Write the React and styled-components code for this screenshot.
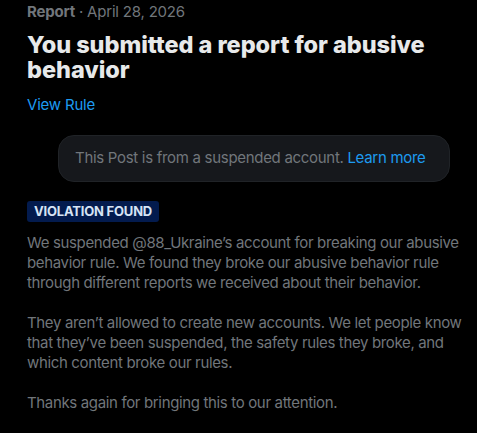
import React from "react";
import styled, { createGlobalStyle } from "styled-components";

const GlobalStyle = createGlobalStyle`
  html, body {
    margin: 0;
    padding: 0;
    background: #000;
  }
  body {
    font-family: Inter, "Liberation Sans", sans-serif;
  }
`;

const Page = styled.div`
  width: 477px;
  height: 433px;
  overflow: hidden;
  background: #000;
  padding: 2px 12px 0 27px;
  box-sizing: border-box;
  display: flex;
  flex-direction: column;
`;

const Meta = styled.div`
  font-size: 15px;
  line-height: 20px;
  color: #71767b;
  letter-spacing: -0.2px;
`;

const MetaStrong = styled.span`
  font-weight: 700;
`;

const Title = styled.h1`
  margin: 10px 0 0;
  font-size: 23.5px;
  line-height: 25px;
  font-weight: 800;
  color: #e7e9ea;
  letter-spacing: -0.05px;
`;

const Link = styled.a`
  color: #1d9bf0;
  text-decoration: none;
  cursor: pointer;
`;

const RuleLink = styled(Link)`
  margin-top: 13px;
  font-size: 15px;
  line-height: 20px;
  letter-spacing: -0.2px;
`;

const Notice = styled.div`
  margin: 20px 0 0 31px;
  width: 392px;
  box-sizing: border-box;
  padding: 12px 16px 13px;
  background: #16181c;
  border: 1px solid #202327;
  border-radius: 16px;
  font-size: 15px;
  line-height: 20px;
  color: #71767b;
  letter-spacing: -0.3px;
`;

const Badge = styled.span`
  align-self: flex-start;
  margin-top: 19px;
  padding: 3px 7px;
  background: #031b4e;
  color: #d6e4f5;
  border-radius: 3px;
  font-size: 13px;
  line-height: 15px;
  font-weight: 700;
  letter-spacing: -0.2px;
`;

const Body = styled.div`
  margin-top: 11px;
  display: flex;
  flex-direction: column;
  gap: 20px;
`;

const Para = styled.p`
  margin: 0;
  font-size: 15px;
  line-height: 20px;
  color: #71767b;
  letter-spacing: -0.35px;
`;

export default function App() {
  return (
    <>
      <GlobalStyle />
      <Page>
        <Meta>
          <MetaStrong>Report</MetaStrong> · April 28, 2026
        </Meta>
        <Title>You submitted a report for abusive behavior</Title>
        <RuleLink>View Rule</RuleLink>
        <Notice>
          This Post is from a suspended account. <Link>Learn more</Link>
        </Notice>
        <Badge>VIOLATION FOUND</Badge>
        <Body>
          <Para>
            We suspended @88_Ukraine’s account for breaking our abusive
            behavior rule. We found they broke our abusive behavior rule
            through different reports we received about their behavior.
          </Para>
          <Para>
            They aren’t allowed to create new accounts. We let people know
            that they’ve been suspended, the safety rules they broke, and
            which content broke our rules.
          </Para>
          <Para>Thanks again for bringing this to our attention.</Para>
        </Body>
      </Page>
    </>
  );
}
